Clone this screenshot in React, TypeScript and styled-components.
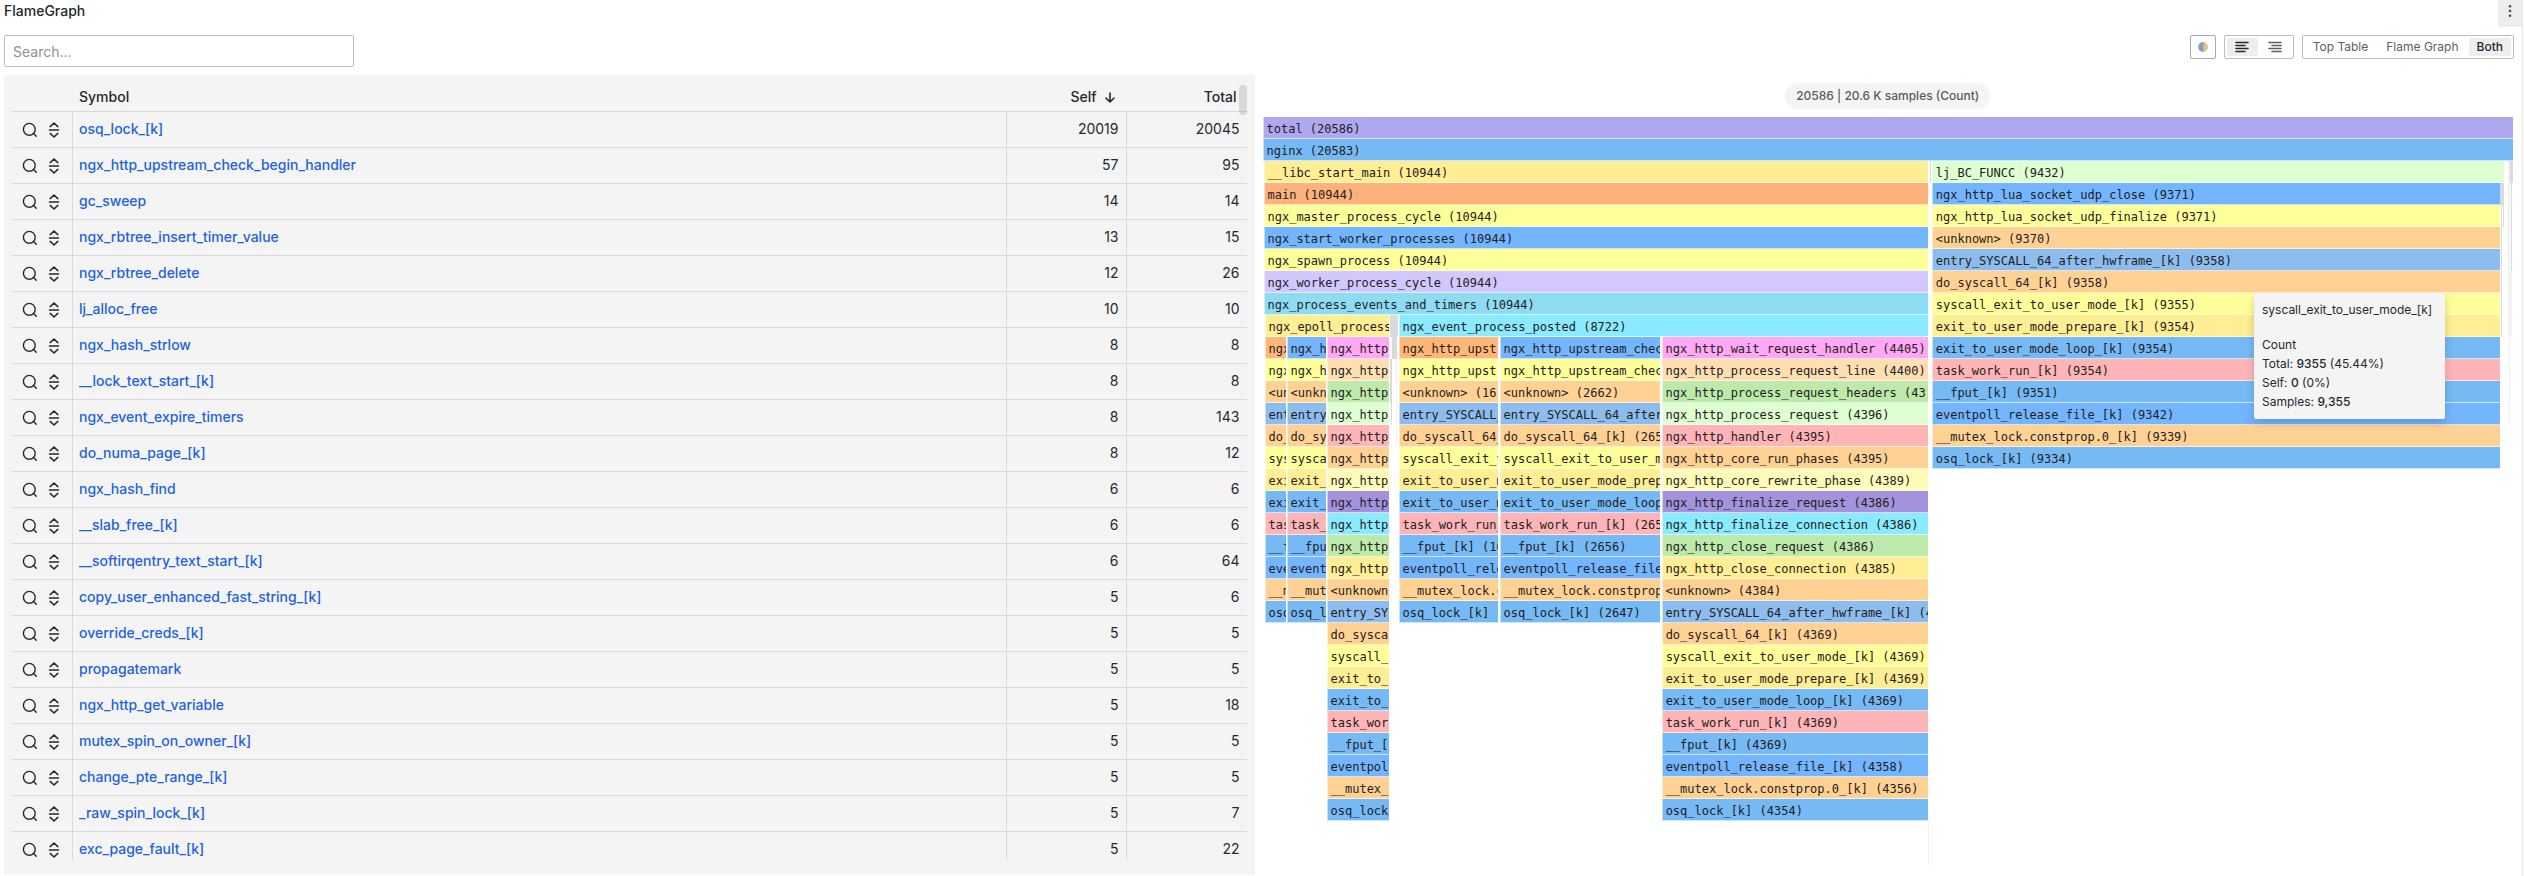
import React from "react";
import styled, { createGlobalStyle } from "styled-components";

const GlobalStyle = createGlobalStyle`
  *, *::before, *::after { box-sizing: border-box; }
  body {
    margin: 0;
    background: #ffffff;
    color: #24292e;
    font-family: Inter, "Liberation Sans", sans-serif;
    font-size: 14px;
    line-height: 22px;
  }
  button, input { font: inherit; color: inherit; }
  button { cursor: pointer; }
`;

const Panel = styled.div`
  display: flex;
  flex-direction: column;
  height: 100vh;
  margin-right: 1px;
  border-right: 1px solid #e6e7e8;
`;

const PanelHeader = styled.header`
  display: flex;
  justify-content: space-between;
  align-items: flex-start;
  height: 35px;
  padding-left: 4px;
`;

const PanelTitle = styled.h1`
  margin: 0;
  font-size: 14px;
  line-height: 22px;
  font-weight: 500;
`;

const MenuButton = styled.button`
  display: flex;
  justify-content: center;
  width: 24px;
  height: 27px;
  padding: 3px 0 0;
  border: 0;
  border-radius: 0 0 0 2px;
  background: #ededee;
  color: #4a4d52;
`;

const Toolbar = styled.div`
  display: flex;
  justify-content: space-between;
  align-items: flex-start;
  padding: 0 8px 8px 4px;
`;

const SearchInput = styled.input`
  width: 350px;
  height: 32px;
  padding: 0 8px;
  border: 1px solid #bcbdbf;
  border-radius: 2px;
  background: #ffffff;
  outline: 0;
  &::placeholder { color: #8e9094; opacity: 1; }
`;

const Controls = styled.div`
  display: flex;
  gap: 8px;
`;

const ColorButton = styled.button`
  display: flex;
  align-items: center;
  justify-content: center;
  width: 26px;
  height: 24px;
  padding: 0;
  border: 1px solid #a9abae;
  border-radius: 2px;
  background: #ffffff;
`;

const ColorSwatch = styled.span`
  width: 10px;
  height: 10px;
  border-radius: 50%;
  background: linear-gradient(90deg, #dba07c 0%, #62a9c4 28%, #a78fd0 46%, #f2a3b4 60%, #f0d264 78%, #a9d39a 100%);
`;

const ButtonGroup = styled.div`
  display: flex;
  align-items: center;
  gap: 2px;
  height: 24px;
  padding: 2px;
  border: 1px solid #bcbdbf;
  border-radius: 2px;
`;

const GroupButton = styled.button<{ $active?: boolean }>`
  display: flex;
  align-items: center;
  justify-content: center;
  min-width: 31px;
  height: 18px;
  padding: 0 8px;
  border: 0;
  border-radius: 2px;
  background: ${(p) => (p.$active ? "#eeeeef" : "transparent")};
  color: ${(p) => (p.$active ? "#24292e" : "#5b5e64")};
  font-size: 12px;
  line-height: 18px;
  font-weight: ${(p) => (p.$active ? 500 : 400)};
`;

const Content = styled.main`
  display: grid;
  grid-template-columns: minmax(0, 1fr) minmax(0, 1fr);
  grid-template-rows: minmax(0, 1fr);
  flex: 1;
  gap: 8px;
  min-height: 0;
  padding: 0 9px 1px 4px;
`;

const TablePanel = styled.section`
  position: relative;
  padding: 8px 8px 15px;
  background: #f4f4f4;
`;

const TableViewport = styled.div`
  height: 100%;
  overflow: hidden;
`;

const ScrollThumb = styled.div`
  position: absolute;
  top: 10px;
  right: 8px;
  width: 8px;
  height: 30px;
  border-radius: 4px;
  background: rgba(36, 41, 46, 0.13);
`;

const Table = styled.table`
  width: 100%;
  table-layout: fixed;
  border-collapse: separate;
  border-spacing: 0;
`;

const ActionCol = styled.col` width: 61px; `;
const ValueCol = styled.col` width: 120px; `;

const HeadCell = styled.th<{ $numeric?: boolean }>`
  height: 29px;
  padding: 0 10px 0 6px;
  border-bottom: 1px solid #d9dadb;
  font-weight: 500;
  text-align: ${(p) => (p.$numeric ? "right" : "left")};
`;

const HeadLabel = styled.span`
  display: inline-flex;
  align-items: center;
  gap: 6px;
`;

const Cell = styled.td<{ $numeric?: boolean }>`
  height: 36px;
  padding: 0 7px 2px 6px;
  border-bottom: 1px solid #d9dadb;
  border-right: 1px solid #d9dadb;
  text-align: ${(p) => (p.$numeric ? "right" : "left")};
  &:last-child { border-right: 0; }
`;

const Actions = styled.div`
  display: flex;
  gap: 8px;
  padding: 2px 0 0 4px;
`;

const IconButton = styled.button`
  display: flex;
  padding: 0;
  border: 0;
  background: none;
`;

const SymbolLink = styled.a`
  color: #1f62e0;
  font-weight: 500;
  text-decoration: none;
`;

const FlamePanel = styled.section`
  position: relative;
  display: flex;
  flex-direction: column;
`;

const Summary = styled.div`
  align-self: center;
  margin: 8px 0;
  padding: 4px 11px;
  border-radius: 13px;
  background: #f4f4f4;
  color: #585b61;
  font-size: 12px;
  line-height: 18px;
  font-weight: 500;
`;

const FlameRow = styled.div`
  display: flex;
  height: 22px;
`;

const Frame = styled.div<{ $color: string }>`
  flex: none;
  overflow: hidden;
  padding: 1px 0 0 3px;
  border-left: 1px solid rgba(255, 255, 255, 0.55);
  border-bottom: 1px solid rgba(255, 255, 255, 0.65);
  background: ${(p) => p.$color};
  color: #1f2022;
  font-family: "DejaVu Sans Mono", monospace;
  font-size: 12px;
  line-height: 22px;
  white-space: pre;
`;

const Sliver = styled.div<{ $color: string }>`
  flex: none;
  background: ${(p) => p.$color};
`;

const Tooltip = styled.div`
  position: absolute;
  top: 218px;
  right: 68px;
  min-width: 191px;
  padding: 8px;
  border-radius: 2px;
  background: #f4f4f4;
  box-shadow: 0 4px 8px rgba(24, 26, 27, 0.2);
  font-size: 12px;
  line-height: 18px;
`;

const TooltipName = styled.p`
  margin: 0 0 16px;
`;

const TooltipLine = styled.div`
  line-height: 19px;
`;

const Strong = styled.b`
  font-weight: 500;
`;

const SearchIcon = () => (
  <svg width="16" height="16" viewBox="0 0 16 16" fill="none" stroke="#24292e" strokeWidth="1.4" strokeLinecap="round">
    <circle cx="7.3" cy="7.3" r="5.9" />
    <path d="M11.5 11.5 14.3 14.3" />
  </svg>
);

const SandwichIcon = () => (
  <svg width="16" height="16" viewBox="0 0 16 16" fill="none" stroke="#24292e" strokeWidth="1.5" strokeLinecap="round" strokeLinejoin="round">
    <path d="M4.2 4.6 8 1l3.8 3.6M3.4 8h9.2M4.2 11.4 8 15l3.8-3.6" />
  </svg>
);

const ArrowDownIcon = () => (
  <svg width="14" height="12" viewBox="-1 0 14 12" fill="none" stroke="#24292e" strokeWidth="1.6" strokeLinecap="round" strokeLinejoin="round">
    <path d="M6 2v9M2 7l4 4 4-4" />
  </svg>
);

const AlignIcon = ({ side }: { side: "left" | "right" }) => (
  <svg width="14" height="12" viewBox="0 0 14 12" fill="none" stroke="currentColor" strokeWidth="1.6" strokeLinecap="round">
    <path d={side === "left" ? "M1 1.5h12M1 4.5h9M1 7.5h12M1 10.5h9" : "M1 1.5h12M4 4.5h9M1 7.5h12M4 10.5h9"} />
  </svg>
);

const DotsIcon = () => (
  <svg width="16" height="16" viewBox="0 0 16 16" fill="currentColor">
    <circle cx="8" cy="3.3" r="1.3" />
    <circle cx="8" cy="8" r="1.3" />
    <circle cx="8" cy="12.7" r="1.3" />
  </svg>
);

const symbols: [string, number, number][] = [
  ["osq_lock_[k]", 20019, 20045],
  ["ngx_http_upstream_check_begin_handler", 57, 95],
  ["gc_sweep", 14, 14],
  ["ngx_rbtree_insert_timer_value", 13, 15],
  ["ngx_rbtree_delete", 12, 26],
  ["lj_alloc_free", 10, 10],
  ["ngx_hash_strlow", 8, 8],
  ["__lock_text_start_[k]", 8, 8],
  ["ngx_event_expire_timers", 8, 143],
  ["do_numa_page_[k]", 8, 12],
  ["ngx_hash_find", 6, 6],
  ["__slab_free_[k]", 6, 6],
  ["__softirqentry_text_start_[k]", 6, 64],
  ["copy_user_enhanced_fast_string_[k]", 5, 6],
  ["override_creds_[k]", 5, 5],
  ["propagatemark", 5, 5],
  ["ngx_http_get_variable", 5, 18],
  ["mutex_spin_on_owner_[k]", 5, 5],
  ["change_pte_range_[k]", 5, 5],
  ["_raw_spin_lock_[k]", 5, 7],
  ["exc_page_fault_[k]", 5, 22],
];

const C = {
  violet: "#b0a8ef",
  sky: "#75b9f5",
  gold: "#ffee94",
  coral: "#ffb17c",
  yellow: "#ffff99",
  blue: "#74b5ff",
  lavender: "#d3c7ff",
  teal: "#8edcf4",
  cyan: "#8aeaff",
  amber: "#ffb777",
  sand: "#ffd294",
  steel: "#8dbcef",
  rose: "#ffb5b7",
  magenta: "#ffa8f5",
  peach: "#ffdfb2",
  green: "#bdeaab",
  mint: "#deffd1",
  cream: "#fffbb8",
  purple: "#a492dd",
  grey: "#d8dbdc",
  mist: "#f1f2f2",
};

// One frame: [first unit, last unit, colour, label]; the root frame spans SPAN units.
type Item = [number, number, string, string?];
const SPAN = 1250;

const kernelStack: [string, string][] = [
  [C.sand, "<unknown>"],
  [C.steel, "entry_SYSCALL_64_after_hwframe_[k]"],
  [C.sand, "do_syscall_64_[k]"],
  [C.yellow, "syscall_exit_to_user_mode_[k]"],
  [C.gold, "exit_to_user_mode_prepare_[k]"],
  [C.sky, "exit_to_user_mode_loop_[k]"],
  [C.rose, "task_work_run_[k]"],
  [C.sky, "__fput_[k]"],
  [C.blue, "eventpoll_release_file_[k]"],
  [C.sand, "__mutex_lock.constprop.0_[k]"],
  [C.sky, "osq_lock_[k]"],
];

const requestStack: [string, string][] = [
  [C.magenta, "ngx_http_wait_request_handler"],
  [C.peach, "ngx_http_process_request_line"],
  [C.green, "ngx_http_process_request_headers"],
  [C.mint, "ngx_http_process_request"],
  [C.rose, "ngx_http_handler"],
  [C.sand, "ngx_http_core_run_phases"],
  [C.cream, "ngx_http_core_rewrite_phase"],
  [C.purple, "ngx_http_finalize_request"],
  [C.cyan, "ngx_http_finalize_connection"],
  [C.green, "ngx_http_close_request"],
  [C.gold, "ngx_http_close_connection"],
  ...kernelStack,
];

const upstreamStack = (first: string): [string, string][] => [
  [first, "ngx_http_upstream_check"],
  [C.yellow, "ngx_http_upstream_check"],
  ...kernelStack,
];

const luaStack: [string, string][] = [
  [C.blue, "ngx_http_lua_socket_udp_close"],
  [C.yellow, "ngx_http_lua_socket_udp_finalize"],
  ...kernelStack,
];

const rows: Item[][] = Array.from({ length: 34 }, () => []);

const addStack = (
  top: number,
  from: number,
  to: number,
  stack: [string, string][],
  counts: (number | string)[] = [],
) =>
  stack.forEach(([color, name], i) =>
    rows[top + i].push([from, to, color, counts[i] ? `${name} (${counts[i]})` : name]),
  );

const addColumn = (top: number, bottom: number, from: number, to: number, color: string) => {
  for (let r = top; r <= bottom; r += 1) rows[r].push([from, to, color]);
};

rows[0].push([0, 1250, C.violet, "total (20586)"]);
rows[1].push([0, 1250, C.sky, "nginx (20583)"]);
addStack(2, 1, 665, [
  [C.gold, "__libc_start_main"],
  [C.coral, "main"],
  [C.yellow, "ngx_master_process_cycle"],
  [C.blue, "ngx_start_worker_processes"],
  [C.yellow, "ngx_spawn_process"],
  [C.lavender, "ngx_worker_process_cycle"],
  [C.teal, "ngx_process_events_and_timers"],
], Array(7).fill(10944));
rows[9].push([2, 126, C.gold, "ngx_epoll_process"], [127, 135, C.grey], [136, 665, C.cyan, "ngx_event_process_posted (8722)"]);

addStack(10, 2, 23, upstreamStack(C.amber));
addStack(10, 24, 63, upstreamStack(C.blue));
addStack(10, 64, 126, requestStack);
addColumn(10, 10, 129, 134, C.grey);
addColumn(11, 12, 127, 129, C.grey);
addColumn(13, 13, 128, 129, C.grey);
addColumn(11, 14, 133, 134, C.mist);
addStack(10, 136, 235, upstreamStack(C.amber), ["", "", 16, "", "", "", "", "", "", 16]);
addStack(10, 237, 397, upstreamStack(C.blue), ["", "", 2662, "", 265, "", "", "", 265, 2656, "", "", 2647]);
addStack(10, 399, 665, requestStack, [
  4405, 4400, 43, 4396, 4395, 4395, 4389, 4386, 4386, 4386, 4385,
  4384, 4369, 4369, 4369, 4369, 4369, 4369, 4369, 4358, 4356, 4354,
]);
addColumn(32, 33, 665, 666, C.mist);
rows[2].push([667, 668, C.grey], [669, 1241, C.mint, "lj_BC_FUNCC (9432)"]);
addStack(3, 669, 1237, luaStack, [9371, 9371, 9370, 9358, 9358, 9355, 9354, 9354, 9354, 9351, 9342, 9339, 9334]);
addColumn(3, 3, 1237, 1241, C.grey);
addColumn(4, 9, 1238, 1239, C.grey);
addColumn(4, 4, 1240, 1241, C.grey);
addColumn(2, 9, 1245, 1247, C.mist);
addColumn(10, 13, 1246, 1247, C.mist);
addColumn(2, 2, 1247, 1250, C.grey);
addColumn(3, 6, 1248, 1249, C.grey);
addColumn(7, 9, 1247, 1249, C.mist);
rows.forEach((row) => row.sort((a, b) => a[0] - b[0]));

const percent = (units: number) => `${(units / SPAN) * 100}%`;

// A label keeps only the characters that its frame has room for.
const CHAR_UNITS = 7;
const fitLabel = (label: string, units: number) => label.slice(0, Math.ceil((units - 6) / CHAR_UNITS));

const FlameGraph = () => (
  <>
    {rows.map((row, r) => (
      <FlameRow key={r}>
        {row.map(([from, to, color, label], i) => {
          const previousEnd = i === 0 ? 0 : row[i - 1][1];
          const style = { width: percent(to - from), marginLeft: percent(from - previousEnd) };
          return label ? (
            <Frame key={i} $color={color} style={style}>{fitLabel(label, to - from)}</Frame>
          ) : (
            <Sliver key={i} $color={color} style={style} />
          );
        })}
      </FlameRow>
    ))}
  </>
);

export default function App() {
  return (
    <>
      <GlobalStyle />
      <Panel>
        <PanelHeader>
          <PanelTitle>FlameGraph</PanelTitle>
          <MenuButton aria-label="Menu"><DotsIcon /></MenuButton>
        </PanelHeader>
        <Toolbar>
          <SearchInput type="text" placeholder="Search..." aria-label="Search" />
          <Controls>
            <ColorButton aria-label="Change color scheme"><ColorSwatch /></ColorButton>
            <ButtonGroup>
              <GroupButton $active aria-label="Align left"><AlignIcon side="left" /></GroupButton>
              <GroupButton aria-label="Align right"><AlignIcon side="right" /></GroupButton>
            </ButtonGroup>
            <ButtonGroup>
              <GroupButton>Top Table</GroupButton>
              <GroupButton>Flame Graph</GroupButton>
              <GroupButton $active>Both</GroupButton>
            </ButtonGroup>
          </Controls>
        </Toolbar>
        <Content>
          <TablePanel>
            <TableViewport>
              <Table>
                <colgroup>
                  <ActionCol />
                  <col />
                  <ValueCol />
                  <ValueCol />
                </colgroup>
                <thead>
                  <tr>
                    <HeadCell />
                    <HeadCell>Symbol</HeadCell>
                    <HeadCell $numeric><HeadLabel>Self <ArrowDownIcon /></HeadLabel></HeadCell>
                    <HeadCell $numeric>Total</HeadCell>
                  </tr>
                </thead>
                <tbody>
                  {symbols.map(([name, self, total]) => (
                    <tr key={name}>
                      <Cell>
                        <Actions>
                          <IconButton aria-label={`Search for ${name}`}><SearchIcon /></IconButton>
                          <IconButton aria-label={`Show sandwich view of ${name}`}><SandwichIcon /></IconButton>
                        </Actions>
                      </Cell>
                      <Cell><SymbolLink href="#">{name}</SymbolLink></Cell>
                      <Cell $numeric>{self}</Cell>
                      <Cell $numeric>{total}</Cell>
                    </tr>
                  ))}
                </tbody>
              </Table>
            </TableViewport>
            <ScrollThumb />
          </TablePanel>
          <FlamePanel>
            <Summary>20586 | 20.6 K samples (Count)</Summary>
            <FlameGraph />
            <Tooltip role="tooltip">
              <TooltipName>syscall_exit_to_user_mode_[k]</TooltipName>
              <TooltipLine>Count</TooltipLine>
              <TooltipLine>Total: <Strong>9355</Strong> (45.44%)</TooltipLine>
              <TooltipLine>Self: <Strong>0</Strong> (0%)</TooltipLine>
              <TooltipLine>Samples: <Strong>9,355</Strong></TooltipLine>
            </Tooltip>
          </FlamePanel>
        </Content>
      </Panel>
    </>
  );
}
